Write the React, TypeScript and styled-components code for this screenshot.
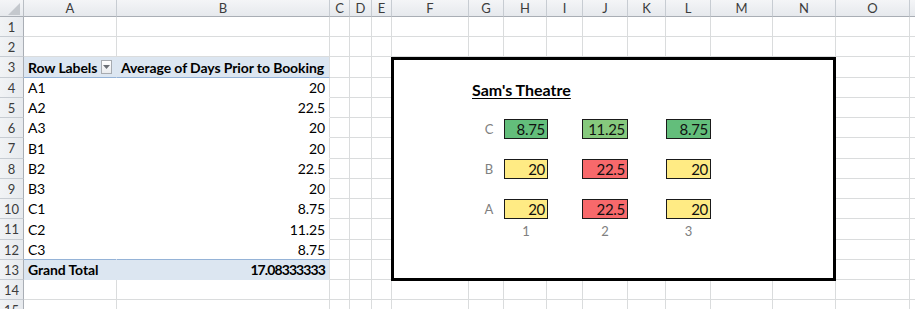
import React from 'react'
import styled, { createGlobalStyle } from 'styled-components'

const GlobalStyle = createGlobalStyle`
  html, body {
    margin: 0;
    padding: 0;
    background: #ffffff;
  }
  body {
    font-family: Lato, "Liberation Sans", sans-serif;
  }
`

const COLS = ['A', 'B', 'C', 'D', 'E', 'F', 'G', 'H', 'I', 'J', 'K', 'L', 'M', 'N', 'O', '']
const WIDTHS = [93, 213, 20, 22, 20, 77, 35, 43, 36, 45, 38, 45, 62, 63, 74, 70]
const HEIGHTS = [20, 20, 21, 20, 20, 20, 21, 20, 20, 20, 21, 20, 20, 20, 20]

const GRID = '#dadcdd'
const BAND = '#dce6f1'
const BAND_LINE = '#95b3d7'

type PivotRow = { label: string; value: string; kind: 'head' | 'body' | 'last' | 'total' }

const pivot: Record<number, PivotRow> = {
  3: { label: 'Row Labels', value: 'Average of Days Prior to Booking', kind: 'head' },
  4: { label: 'A1', value: '20', kind: 'body' },
  5: { label: 'A2', value: '22.5', kind: 'body' },
  6: { label: 'A3', value: '20', kind: 'body' },
  7: { label: 'B1', value: '20', kind: 'body' },
  8: { label: 'B2', value: '22.5', kind: 'body' },
  9: { label: 'B3', value: '20', kind: 'body' },
  10: { label: 'C1', value: '8.75', kind: 'body' },
  11: { label: 'C2', value: '11.25', kind: 'body' },
  12: { label: 'C3', value: '8.75', kind: 'last' },
  13: { label: 'Grand Total', value: '17.08333333', kind: 'total' },
}

const seats = [
  { row: 'C', values: [{ v: '8.75', c: '#63be7b' }, { v: '11.25', c: '#86c97d' }, { v: '8.75', c: '#63be7b' }] },
  { row: 'B', values: [{ v: '20', c: '#ffeb84' }, { v: '22.5', c: '#f8696b' }, { v: '20', c: '#ffeb84' }] },
  { row: 'A', values: [{ v: '20', c: '#ffeb84' }, { v: '22.5', c: '#f8696b' }, { v: '20', c: '#ffeb84' }] },
]
const SEAT_W = [44, 46, 45]

const Page = styled.div`
  position: relative;
  width: 915px;
  height: 309px;
  overflow: hidden;
  background: #fff;
`

const Sheet = styled.div`
  display: grid;
  grid-template-columns: 24px ${WIDTHS.map((w) => `${w}px`).join(' ')};
  grid-template-rows: 17px ${HEIGHTS.map((h) => `${h}px`).join(' ')};
`

const Corner = styled.div`
  box-sizing: border-box;
  background: linear-gradient(#f4f5f7, #e6e9ed);
  border-right: 1px solid #b9bec4;
  border-bottom: 1px solid #a9aeb5;
  display: flex;
  align-items: flex-end;
  justify-content: flex-end;
  padding: 0 3px 1px 0;
`

const ColHead = styled.div`
  box-sizing: border-box;
  background: linear-gradient(#f4f5f7, #e6e9ed);
  border-right: 1px solid #c7ccd2;
  border-bottom: 1px solid #a9aeb5;
  color: #3c3c3c;
  font-size: 13px;
  line-height: 16px;
  text-align: center;
  overflow: hidden;
`

const RowHead = styled.div`
  box-sizing: border-box;
  background: linear-gradient(90deg, #f1f3f5, #e7eaee);
  border-right: 1px solid #a9aeb5;
  border-bottom: 1px solid #c7ccd2;
  color: #3c3c3c;
  font-size: 13px;
  display: flex;
  align-items: center;
  justify-content: center;
`

const Cell = styled.div<{
  $bg?: string
  $right?: string
  $bottom?: string
  $bold?: boolean
  $align?: 'left' | 'right'
  $tight?: boolean
}>`
  box-sizing: border-box;
  background: ${({ $bg }) => $bg || '#fff'};
  border-right: 1px solid ${({ $right }) => $right || GRID};
  border-bottom: 1px solid ${({ $bottom }) => $bottom || GRID};
  font-size: 14px;
  font-weight: ${({ $bold }) => ($bold ? 700 : 400)};
  letter-spacing: ${({ $tight }) => ($tight ? '-0.9px' : '-0.1px')};
  color: #000;
  display: flex;
  align-items: center;
  justify-content: ${({ $align }) => ($align === 'right' ? 'flex-end' : 'flex-start')};
  padding: 0 4px 0 4px;
  white-space: nowrap;
  overflow: hidden;
`

const Dropdown = styled.span`
  box-sizing: border-box;
  width: 14px;
  height: 14px;
  margin-left: 4px;
  border: 1px solid #a7abb0;
  background: linear-gradient(#ffffff, #e9ebee);
  display: inline-flex;
  align-items: center;
  justify-content: center;
`

const Shape = styled.div`
  position: absolute;
  left: 391px;
  top: 57px;
  width: 445px;
  height: 224px;
  box-sizing: border-box;
  border: 3px solid #000;
  background: #fff;
  display: flex;
  flex-direction: column;
  padding: 21px 0 0 78px;
`

const Title = styled.div`
  font-size: 16px;
  font-weight: 700;
  line-height: 18px;
  text-decoration: underline;
  text-underline-offset: 2px;
  color: #000;
  margin-bottom: 20px;
`

const SeatMap = styled.div`
  display: flex;
  flex-direction: column;
  gap: 20px;
`

const SeatRow = styled.div`
  display: grid;
  grid-template-columns: 32px 78px 84px 45px;
  height: 20px;
  align-items: center;
`

const Label = styled.div<{ $w?: number }>`
  width: ${({ $w }) => ($w ? `${$w}px` : 'auto')};
  text-align: center;
  color: #808080;
  font-size: 13px;
  padding-left: ${({ $w }) => ($w ? '0' : '2px')};
`

const Seat = styled.div<{ $bg: string; $w: number }>`
  box-sizing: border-box;
  width: ${({ $w }) => $w}px;
  height: 20px;
  border: 1px solid #1a1a1a;
  background: ${({ $bg }) => $bg};
  color: #111;
  font-size: 15px;
  line-height: 18px;
  letter-spacing: -0.3px;
  text-align: right;
  padding-right: 2px;
`

const NumberRow = styled(SeatRow)`
  margin-top: 3px;
  height: 18px;
`

function pivotCells(p: PivotRow) {
  const banded = p.kind === 'head' || p.kind === 'total'
  const bg = banded ? BAND : '#fff'
  const bottom = p.kind === 'head' || p.kind === 'last' ? BAND_LINE : bg
  return [
    <Cell key="A" $bg={bg} $right={bg} $bottom={bottom} $bold={banded}>
      {p.label}
      {p.kind === 'head' && (
        <Dropdown>
          <svg width="7" height="4" viewBox="0 0 7 4">
            <path d="M0 0 H7 L3.5 4 Z" fill="#6b6f75" />
          </svg>
        </Dropdown>
      )}
    </Cell>,
    <Cell
      key="B"
      $bg={bg}
      $bottom={bottom}
      $bold={banded}
      $tight={p.kind === 'total'}
      $align={p.kind === 'head' ? 'left' : 'right'}
    >
      {p.value}
    </Cell>,
  ]
}

export default function App() {
  return (
    <Page>
      <GlobalStyle />
      <Sheet>
        <Corner>
          <svg width="12" height="12" viewBox="0 0 12 12">
            <path d="M12 0 V12 H0 Z" fill="#c4c8cd" />
          </svg>
        </Corner>
        {COLS.map((c, i) => (
          <ColHead key={i}>{c}</ColHead>
        ))}
        {HEIGHTS.map((_, i) => {
          const r = i + 1
          const p = pivot[r]
          return (
            <React.Fragment key={r}>
              <RowHead>{r}</RowHead>
              {p ? pivotCells(p) : [<Cell key="A" />, <Cell key="B" />]}
              {COLS.slice(2).map((_, j) => (
                <Cell key={j} />
              ))}
            </React.Fragment>
          )
        })}
      </Sheet>
      <Shape>
        <Title>Sam's Theatre</Title>
        <SeatMap>
          {seats.map((s) => (
            <SeatRow key={s.row}>
              <Label>{s.row}</Label>
              {s.values.map((v, j) => (
                <Seat key={j} $bg={v.c} $w={SEAT_W[j]}>
                  {v.v}
                </Seat>
              ))}
            </SeatRow>
          ))}
        </SeatMap>
        <NumberRow>
          <span />
          {SEAT_W.map((w, j) => (
            <Label key={j} $w={w}>
              {j + 1}
            </Label>
          ))}
        </NumberRow>
      </Shape>
    </Page>
  )
}
